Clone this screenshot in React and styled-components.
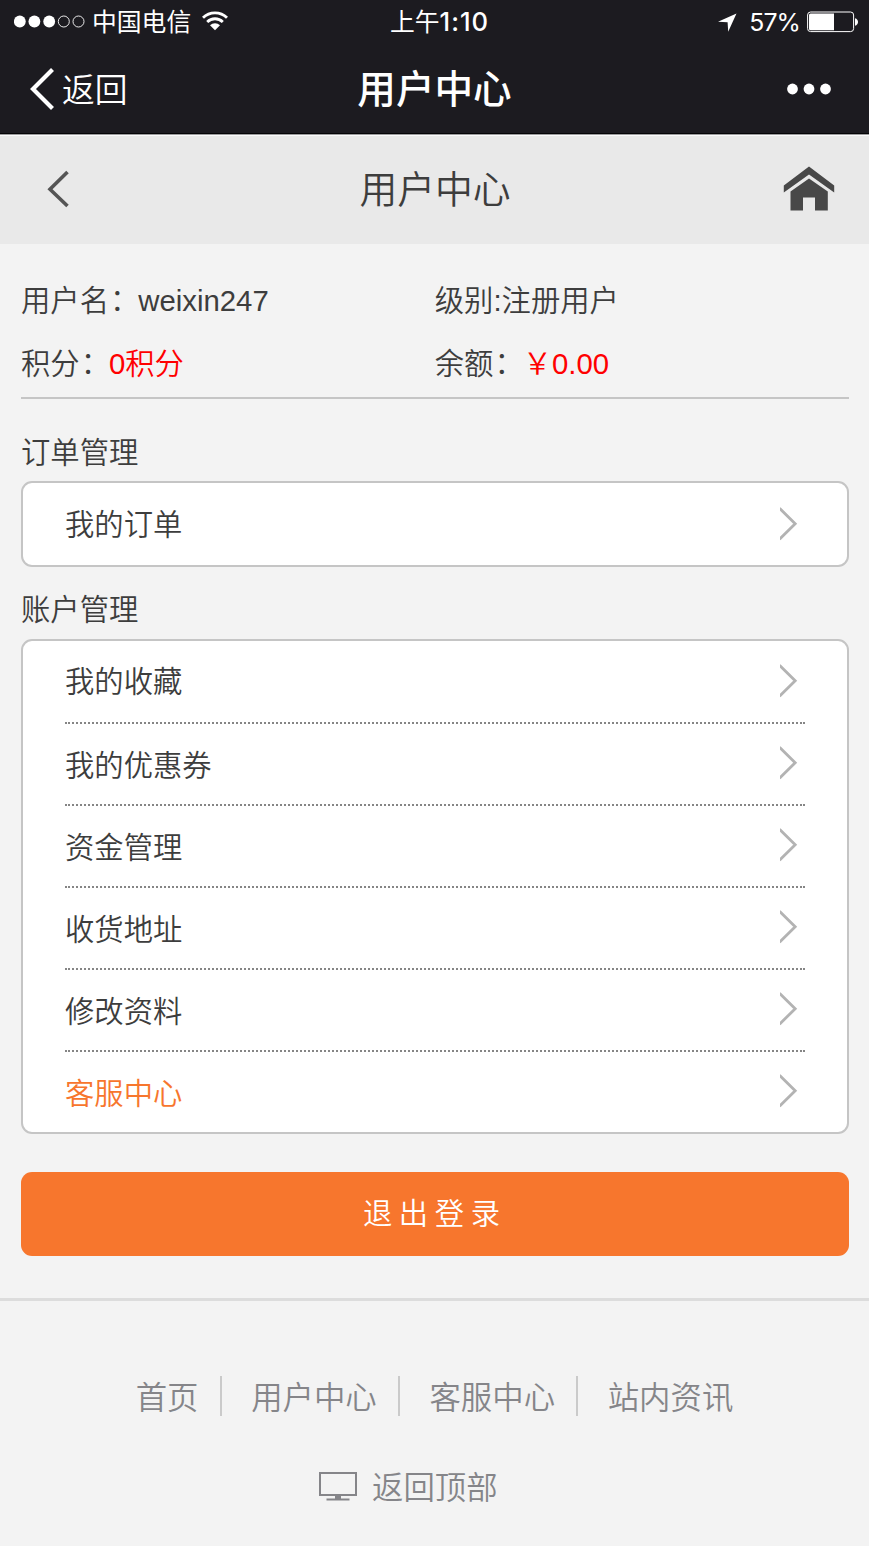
import React from "react";
import styled, { createGlobalStyle } from "styled-components";

const GlobalStyle = createGlobalStyle`
  * { box-sizing: border-box; }
  body {
    margin: 0;
    background: #f3f3f3;
    color: #3d3d3d;
    font-family: "Liberation Sans", "Noto Sans CJK SC", sans-serif;
    font-size: 29.33px;
    font-weight: 350;
  }
`;

const Page = styled.div`
  width: 869px;
  height: 1546px;
  overflow: hidden;
  display: flex;
  flex-direction: column;
`;

const TopBar = styled.div`
  height: 134px;
  flex: none;
  background: #1c1b20;
  color: #fff;
  border-bottom: 1px solid #050507;
`;

const StatusBar = styled.div`
  height: 44px;
  padding: 0 11px 0 14px;
  display: grid;
  grid-template-columns: 1fr auto 1fr;
  align-items: center;
  font: 400 24.8px/44px Inter, "Noto Sans CJK SC", sans-serif;
`;

const StatusGroup = styled.div`
  display: flex;
  align-items: center;
  justify-content: ${(p) => (p.$end ? "flex-end" : "flex-start")};
  gap: ${(p) => p.$gap}px;
`;

const Carrier = styled.span`
  margin-right: 4px;
`;

const Clock = styled.span`
  padding-left: 7px;
`;

const ClockDigits = styled.span`
  font-weight: 500;
  font-size: 25.6px;
  letter-spacing: 1px;
`;

const Percent = styled.span`
  margin-left: 4px;
  margin-right: -1px;
  letter-spacing: -0.9px;
`;

const NavBar = styled.div`
  height: 90px;
  padding: 0 38px 0 30px;
  display: grid;
  grid-template-columns: 1fr auto 1fr;
  align-items: center;
`;

const BackLink = styled.div`
  display: flex;
  align-items: center;
  gap: 7px;
  font-size: 32.8px;
`;

const BackLabel = styled.span`
  padding-bottom: 3px;
`;

const NavTitle = styled.div`
  padding: 2px 0 0 8px;
  font-size: 38.6px;
  font-weight: 500;
  line-height: 88px;
`;

const MoreIcon = styled.svg`
  justify-self: end;
`;

const SiteHeader = styled.header`
  height: 110px;
  flex: none;
  padding: 0 34px 0 46px;
  background: #e9e9e9;
  box-shadow: inset 0 1px #9c9c9e, inset 0 2px #fbfbfb;
  display: grid;
  grid-template-columns: 1fr auto 1fr;
  align-items: center;
`;

const SiteTitle = styled.h1`
  margin: 0;
  padding: 2px 11px 0 0;
  font-size: 37.8px;
  font-weight: 350;
  line-height: 108px;
`;

const HomeIcon = styled.svg`
  justify-self: end;
`;

const Main = styled.main`
  padding: 25px 20.5px 0 21px;
`;

const Profile = styled.section`
  height: 130px;
  border-bottom: 2px solid #c5c5c5;
  display: grid;
  grid-template-columns: 1fr 1fr;
  grid-auto-rows: 63px;
  line-height: 63px;
`;

const Colon = styled.span`
  line-height: 1;
  vertical-align: 1px;
  margin: 0 -1px 0 1px;
`;

const Red = styled.span`
  color: #f00;
`;

const SectionTitle = styled.h2`
  margin: ${(p) => p.$top}px 0 0;
  height: 44px;
  font-size: inherit;
  font-weight: inherit;
  line-height: 44px;
`;

const Card = styled.div`
  margin-top: ${(p) => p.$top}px;
  padding: 0 42px;
  border: 2px solid #c5c5c5;
  border-radius: 11px;
  background: #fff;
`;

const Row = styled.div`
  height: ${(p) => p.$height}px;
  padding-right: 7px;
  display: flex;
  align-items: center;
  justify-content: space-between;
  color: ${(p) => (p.$accent ? "#f7762d" : "inherit")};

  &:not(:last-child) {
    border-bottom: 2px dotted #858585;
  }
`;

const RowLabel = styled.span`
  padding-bottom: ${(p) => p.$lift}px;
`;

const ArrowIcon = styled.svg`
  margin-bottom: ${(p) => p.$lift}px;
`;

const Logout = styled.button`
  display: block;
  width: 100%;
  height: 84px;
  margin: 38px 0 0;
  padding: 0 0 7px;
  border: 0;
  border-radius: 11px;
  background: #f7762d;
  color: #fff;
  font: inherit;
  letter-spacing: 6.6px;
`;

const Footer = styled.footer`
  margin-top: 42px;
  border-top: 3px solid #dcdcdc;
  padding-top: 75px;
  color: #858589;
  font-size: 31.4px;
`;

const FooterNav = styled.nav`
  display: flex;
  justify-content: center;
`;

const FooterLink = styled.a`
  height: 40px;
  line-height: 46px;
  padding: 0 21.3px 0 29.400px;

  &:first-child { padding-left: 0; }
  &:last-child { padding-right: 0; }
  &:not(:last-child) { border-right: 2px solid #cacaca; }
`;

const BackTop = styled.div`
  height: 48px;
  margin: 46px 0 0 319px;
  display: flex;
  align-items: center;
  gap: 15px;
`;

const BackTopLabel = styled.span`
  padding-bottom: 2px;
`;

const Arrow = ({ lift }) => (
  <ArrowIcon $lift={lift} width="18" height="34" viewBox="0 0 18 34">
    <path d="M-.5 1.2 15.2 16.700-.5 32.200" fill="none" stroke="#b3b3b3" strokeWidth="2.8" />
  </ArrowIcon>
);

const accountItems = ["我的收藏", "我的优惠券", "资金管理", "收货地址", "修改资料", "客服中心"];

export default function App() {
  return (
    <Page>
      <GlobalStyle />
      <TopBar>
        <StatusBar>
          <StatusGroup $gap={7}>
            <svg width="71" height="14" viewBox="0 0 71 14">
              {[5.8, 20.4, 35.2].map((x) => (
                <circle key={x} cx={x} cy="6.5" r="5.9" fill="#fff" />
              ))}
              {[49.8, 64.5].map((x) => (
                <circle key={x} cx={x} cy="6.5" r="5.5" fill="none" stroke="#fff" strokeWidth="0.9" />
              ))}
            </svg>
            <Carrier>中国电信</Carrier>
            <svg width="26" height="22" viewBox="0 0 26 22">
              <path d="M1 6.8a17 17 0 0 1 24 0M5.2 11a11 11 0 0 1 15.6 0" fill="none" stroke="#fff" strokeWidth="2.8" />
              <path d="m13 19.2-5-5a7.2 7.2 0 0 1 10 0z" fill="#fff" />
            </svg>
          </StatusGroup>
          <Clock>上午<ClockDigits>1:10</ClockDigits></Clock>
          <StatusGroup $end $gap={8}>
            <svg width="19" height="19" viewBox="0 0 19 19">
              <path d="M18.5.5 0 8.7l9.6.6.6 9.4z" fill="#fff" />
            </svg>
            <Percent>57%</Percent>
            <svg width="51" height="22" viewBox="0 0 51 22">
              <rect x=".6" y="1" width="46" height="19.6" rx="3" fill="none" stroke="#fff" strokeWidth="1" />
              <path d="M3.5 2.4H27v16.8H3.5a1.5 1.5 0 0 1-1.5-1.5V3.9a1.5 1.5 0 0 1 1.5-1.5z" fill="#fff" />
              <path d="M48 7.2c4 1 4 6.5 0 7.5z" fill="#fff" />
            </svg>
          </StatusGroup>
        </StatusBar>
        <NavBar>
          <BackLink>
            <svg width="25" height="42" viewBox="0 0 25 42">
              <path d="M22.5 1.5 3 21l19.5 19.5" fill="none" stroke="#fff" strokeWidth="4.2" />
            </svg>
            <BackLabel>返回</BackLabel>
          </BackLink>
          <NavTitle>用户中心</NavTitle>
          <MoreIcon width="44" height="12" viewBox="0 0 44 12">
            <circle cx="5.5" cy="6" r="5.4" fill="#fff" />
            <circle cx="22" cy="6" r="5.4" fill="#fff" />
            <circle cx="38.5" cy="6" r="5.4" fill="#fff" />
          </MoreIcon>
        </NavBar>
      </TopBar>

      <SiteHeader>
        <svg width="24" height="38" viewBox="0 0 24 38">
          <path d="M21.5 2 4 19.3 21.5 36" fill="none" stroke="#555" strokeWidth="3.6" />
        </svg>
        <SiteTitle>用户中心</SiteTitle>
        <HomeIcon width="52" height="46" viewBox="0 0 52 46">
          <path d="M26 .5 51.2 19.5v7L26 8.5.8 26.5v-7z" fill="#484848" />
          <path d="M26 12.5 44.8 25.5V44.5H32V31.5H20V44.5H7.5V25.5z" fill="#484848" />
        </HomeIcon>
      </SiteHeader>

      <Main>
        <Profile>
          <div>用户名<Colon>：</Colon>weixin247</div>
          <div>级别:注册用户</div>
          <div>积分<Colon>：</Colon><Red>0积分</Red></div>
          <div>余额<Colon>：</Colon><Red>￥0.00</Red></div>
        </Profile>

        <SectionTitle $top={32}>订单管理</SectionTitle>
        <Card $top={6}>
          <Row $height={82}>
            <RowLabel $lift={5}>我的订单</RowLabel>
            <Arrow lift={1} />
          </Row>
        </Card>

        <SectionTitle $top={21}>账户管理</SectionTitle>
        <Card $top={7}>
          {accountItems.map((label, i) => (
            <Row
              key={label}
              $height={i === 0 ? 83 : i === accountItems.length - 1 ? 80 : 82}
              $accent={label === "客服中心"}
            >
              <RowLabel $lift={i === 0 ? 5 : 3}>{label}</RowLabel>
              <Arrow lift={i === 0 ? 1 : 3} />
            </Row>
          ))}
        </Card>

        <Logout>退出登录</Logout>
      </Main>

      <Footer>
        <FooterNav>
          <FooterLink>首页</FooterLink>
          <FooterLink>用户中心</FooterLink>
          <FooterLink>客服中心</FooterLink>
          <FooterLink>站内资讯</FooterLink>
        </FooterNav>
        <BackTop>
          <svg width="38" height="30" viewBox="0 0 38 30">
            <path d="M1 2h36v22H1z" fill="none" stroke="#858589" strokeWidth="2" />
            <path d="M1 23h36v2H1zM16 24h6v5h-6zM7.5 27.5h23v2h-23z" fill="#858589" />
          </svg>
          <BackTopLabel>返回顶部</BackTopLabel>
        </BackTop>
      </Footer>
    </Page>
  );
}
